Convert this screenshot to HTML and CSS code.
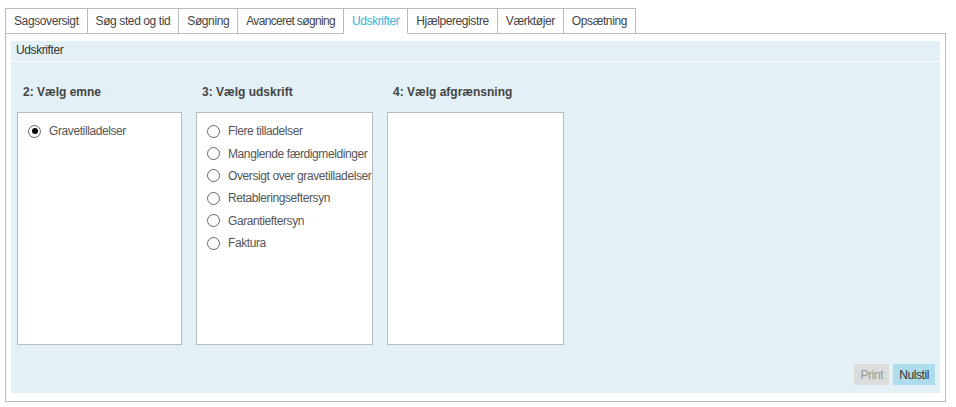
FILE: index.html
```html
<!DOCTYPE html>
<html lang="da">
<head>
    <meta charset="UTF-8">
    <meta name="viewport" content="width=device-width, initial-scale=1.0">
    <title>Udskrifter</title>
    <link rel="stylesheet" href="styles.css">
</head>
<body>
    <div class="page">
        <ul class="tabs">
            <li>Sagsoversigt</li>
            <li>Søg sted og tid</li>
            <li>Søgning</li>
            <li class="tight">Avanceret søgning</li>
            <li class="active">Udskrifter</li>
            <li>Hjælperegistre</li>
            <li>Værktøjer</li>
            <li>Opsætning</li>
        </ul>
        <div class="panel">
            <div class="panel-title">Udskrifter</div>
            <div class="panel-body">
                <div class="columns">
                    <div class="column">
                        <h3>2: Vælg emne</h3>
                        <div class="box narrow">
                            <div class="option"><span class="radio checked"></span>Gravetilladelser</div>
                        </div>
                    </div>
                    <div class="column">
                        <h3>3: Vælg udskrift</h3>
                        <div class="box">
                            <div class="option"><span class="radio"></span>Flere tilladelser</div>
                            <div class="option"><span class="radio"></span>Manglende færdigmeldinger</div>
                            <div class="option"><span class="radio"></span>Oversigt over gravetilladelser</div>
                            <div class="option"><span class="radio"></span>Retableringseftersyn</div>
                            <div class="option"><span class="radio"></span>Garantieftersyn</div>
                            <div class="option"><span class="radio"></span>Faktura</div>
                        </div>
                    </div>
                    <div class="column">
                        <h3>4: Vælg afgrænsning</h3>
                        <div class="box"></div>
                    </div>
                </div>
                <div class="actions">
                    <button class="btn disabled">Print</button>
                    <button class="btn primary">Nulstil</button>
                </div>
            </div>
        </div>
    </div>
</body>
</html>
```

FILE: styles.css
```css
body {
    margin: 0;
    padding: 0;
    font-family: "Liberation Sans", Arial, sans-serif;
    font-size: 12px;
    letter-spacing: -0.4px;
    color: #444;
    background-color: #fff;
}

.page {
    padding: 8px 0 0 5px;
    width: 941px;
}

.tabs {
    list-style: none;
    margin: 0;
    padding: 0;
    display: flex;
    position: relative;
    z-index: 1;
}

.tabs li {
    border: 1px solid #bbb;
    border-left: none;
    padding: 0 8px;
    height: 24px;
    line-height: 24px;
    color: #444;
    background-color: #fff;
}

.tabs li:first-child {
    border-left: 1px solid #bbb;
}

.tabs li.tight {
    letter-spacing: -0.65px;
}

.tabs li.active {
    color: #35b2d9;
    border-bottom-color: #fff;
}

.panel {
    border: 1px solid #bbb;
    margin-top: -1px;
    padding: 7px 5px 8px 5px;
}

.panel-title {
    background-color: #e3f1f7;
    height: 20px;
    line-height: 18px;
    padding-left: 5px;
    color: #333;
    margin-bottom: 1px;
}

.panel-body {
    background-color: #e3f1f7;
    height: 301px;
    padding: 22px 5px 8px 6px;
    display: flex;
    flex-direction: column;
}

.columns {
    display: flex;
    gap: 14px;
}

.column h3 {
    margin: 0 0 12px 6px;
    font-size: 12px;
    line-height: 16px;
    font-weight: bold;
    letter-spacing: 0;
    color: #444;
}

.box {
    width: 175px;
    height: 224px;
    border: 1px solid #bbb;
    background-color: #fff;
    padding-top: 7px;
    box-sizing: content-box;
}

.box.narrow {
    width: 163px;
}

.option {
    display: flex;
    align-items: center;
    height: 22.4px;
    padding-left: 10px;
    color: #555;
    white-space: nowrap;
}

.radio {
    width: 11px;
    height: 11px;
    border: 1px solid #666;
    border-radius: 50%;
    margin-right: 8px;
    position: relative;
    background-color: #fff;
    flex: none;
}

.radio.checked::after {
    content: "";
    position: absolute;
    left: 2.5px;
    top: 2.5px;
    width: 6px;
    height: 6px;
    border-radius: 50%;
    background-color: #000;
}

.actions {
    margin-top: auto;
    display: flex;
    justify-content: flex-end;
    gap: 4px;
}

.btn {
    font-family: "Liberation Sans", Arial, sans-serif;
    font-size: 12px;
    letter-spacing: -0.4px;
    height: 21px;
    padding: 0 6px;
    border: none;
    cursor: pointer;
}

.btn.disabled {
    background-color: #dcdcdc;
    color: #999;
    cursor: default;
}

.btn.primary {
    background-color: #addcec;
    color: #333;
}
```
